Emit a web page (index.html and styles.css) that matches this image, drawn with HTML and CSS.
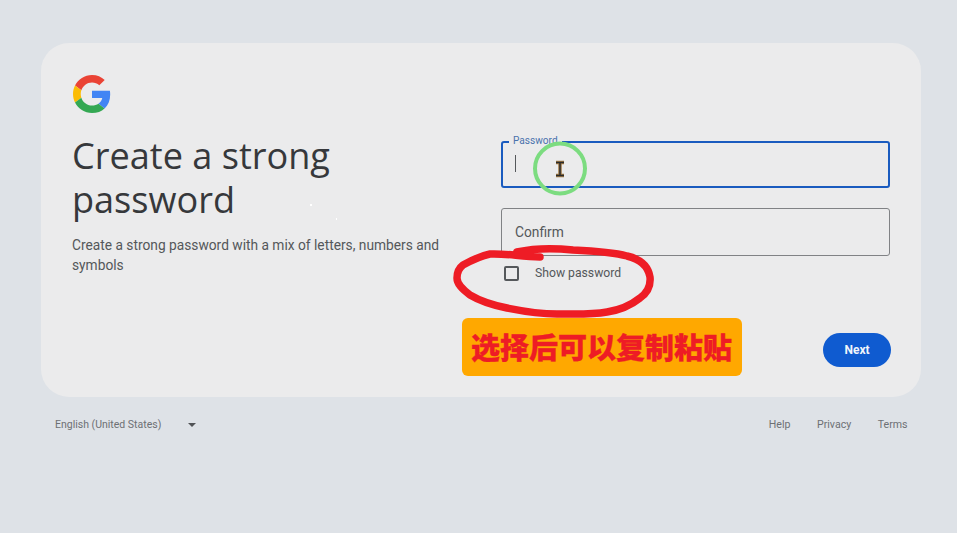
FILE: index.html
```html
<!DOCTYPE html>
<html lang="en">
<head>
  <meta charset="UTF-8" />
  <title>Create a strong password</title>
  <link rel="stylesheet" href="styles.css">
</head>
<body>
  <div class="card">
    <div class="intro">
      <svg class="logo" viewBox="0 0 48 48">
        <path fill="#EA4335" d="M24 9.5c3.54 0 6.71 1.22 9.21 3.6l6.85-6.85C35.9 2.38 30.47 0 24 0 14.62 0 6.51 5.38 2.56 13.22l7.98 6.19C12.43 13.72 17.74 9.5 24 9.5z"/>
        <path fill="#4285F4" d="M46.98 24.55c0-1.57-.15-3.09-.38-4.55H24v9.02h12.94c-.58 2.96-2.26 5.48-4.78 7.18l7.73 6c4.51-4.18 7.09-10.36 7.09-17.65z"/>
        <path fill="#FBBC05" d="M10.53 28.59c-.48-1.45-.76-2.99-.76-4.59s.27-3.14.76-4.59l-7.98-6.19C.92 16.46 0 20.12 0 24c0 3.88.92 7.54 2.56 10.78l7.97-6.19z"/>
        <path fill="#34A853" d="M24 48c6.48 0 11.93-2.13 15.89-5.81l-7.73-6c-2.15 1.45-4.92 2.3-8.16 2.3-6.26 0-11.57-4.22-13.47-9.91l-7.98 6.19C6.51 42.62 14.62 48 24 48z"/>
      </svg>
      <h1>Create a strong password</h1>
      <p class="hint">Create a strong password with a mix of letters, numbers and symbols</p>
    </div>

    <div class="form">
      <div class="field active">
        <span class="float-label">Password</span>
        <span class="caret"></span>
      </div>
      <div class="field">Confirm</div>
      <div class="show-row">
        <span class="checkbox"></span>
        <span>Show password</span>
      </div>
      <div class="actions">
        <button class="next">Next</button>
      </div>
    </div>
  </div>

  <div class="footer">
    <div class="lang">
      <span>English (United States)</span>
      <span class="arrow"></span>
    </div>
    <div class="links">
      <span>Help</span>
      <span>Privacy</span>
      <span>Terms</span>
    </div>
  </div>

  <!-- annotations drawn over the screenshot -->
  <svg class="marks" viewBox="0 0 957 533">
    <path class="scrawl" d="M517 252 C535 248 555 248 573 250 C595 251 612 252 627 256 C640 259 648 265 650 277 C651 287 647 293 640 298 C630 306 620 310 607 312 C590 315 575 314 557 314 C540 314 522 311 507 308 C492 305 480 301 470 295 C462 289 457 284 457 278 C457 272 459 268 463 265 C472 260 480 256 490 254 C505 253 522 257 540 257"/>
    <circle class="ring" cx="560" cy="168.5" r="25"/>
    <path class="ibeam-edge" d="M556 162.500h8M560 162.500v13M556 175.500h8"/>
    <path class="ibeam" d="M556 162.500h8M560 162.500v13M556 175.500h8"/>
    <rect class="speck" x="310" y="204" width="2" height="2"/>
    <rect class="speck" x="336" y="218" width="1" height="2"/>
  </svg>
  <div class="tag">选择后可以复制粘贴</div>
</body>
</html>
```

FILE: styles.css
```css
body {
  margin: 0;
  height: 533px;
  overflow: hidden;
  position: relative;
  background-color: #dee2e7;
  font-family: Roboto, "Liberation Sans", sans-serif;
  color: #54575a;
}
.card {
  display: flex;
  justify-content: space-between;
  box-sizing: border-box;
  width: 880px;
  height: 354px;
  margin: 43px 0 0 41px;
  padding: 32px 30px 30px 31px;
  background: #ebebec;
  border-radius: 28px;
}
.intro {
  width: 380px;
}
.logo {
  display: block;
  width: 38px;
  height: 38px;
  margin-left: 1px;
}
h1 {
  margin: 20px 0 0;
  font-family: "Open Sans", sans-serif;
  font-size: 36.1px;
  font-weight: 400;
  line-height: 44px;
  color: #36383b;
}
.hint {
  margin: 14px 0 0;
  font-size: 13.75px;
  line-height: 20px;
}
.form {
  width: 390px;
  padding-top: 66px;
  display: flex;
  flex-direction: column;
}
.field {
  position: relative;
  box-sizing: border-box;
  width: 389px;
  height: 48px;
  margin-bottom: 20px;
  padding: 0 13px;
  display: flex;
  align-items: center;
  border: 1px solid #808285;
  border-radius: 3px;
  font-size: 13.8px;
}
.field.active {
  height: 47px;
  border: 2px solid #1a5bbf;
}
.float-label {
  position: absolute;
  top: -9px;
  left: 6px;
  padding: 0 4px;
  background: #ebebec;
  color: #4a72ad;
  font-size: 10.1px;
  line-height: 14px;
}
.caret {
  width: 1px;
  height: 17px;
  margin: -3px 0 0 -1px;
  background: #55585b;
}
.show-row {
  display: flex;
  align-items: center;
  gap: 16px;
  margin: -12px 0 0 3px;
  font-size: 12.2px;
  line-height: 18px;
}
.checkbox {
  box-sizing: border-box;
  width: 15px;
  height: 15px;
  border: 2px solid #55585b;
  border-radius: 2px;
}
.actions {
  display: flex;
  justify-content: flex-end;
  margin-top: auto;
}
.next {
  width: 68px;
  height: 34px;
  border: none;
  border-radius: 17px;
  background-color: #0f5bd0;
  color: #f1f5fb;
  font-family: Roboto, sans-serif;
  font-size: 12px;
  font-weight: 700;
}
.footer {
  display: flex;
  justify-content: space-between;
  align-items: center;
  margin: 20px 49.500px 0 55px;
  font-size: 10.5px;
  line-height: 16px;
  color: #6d7074;
}
.lang {
  display: flex;
  align-items: center;
  gap: 27px;
}
.arrow {
  width: 0;
  height: 0;
  border-left: 4px solid transparent;
  border-right: 4px solid transparent;
  border-top: 4px solid #505356;
}
.links {
  display: flex;
  gap: 26.500px;
  font-size: 10.6px;
}
.marks {
  position: absolute;
  top: 0;
  left: 0;
  width: 957px;
  height: 533px;
  pointer-events: none;
}
.scrawl {
  fill: none;
  stroke: #ee1c25;
  stroke-width: 7.5;
  stroke-linecap: round;
  stroke-linejoin: round;
}
.ring {
  fill: none;
  stroke: #7cdc80;
  stroke-width: 4;
}
.ibeam-edge {
  fill: none;
  stroke: #a07a45;
  stroke-width: 3.5;
}
.ibeam {
  fill: none;
  stroke: #2b2b2b;
  stroke-width: 1.5;
}
.speck {
  fill: #ffffff;
}
.tag {
  position: absolute;
  top: 318px;
  left: 462px;
  width: 279px;
  height: 58px;
  padding-right: 1px;
  border-radius: 6px;
  background: #ffa800;
  color: #ee1c25;
  font-family: "Noto Sans CJK SC", sans-serif;
  font-size: 29px;
  font-weight: 900;
  line-height: 57px;
  text-align: center;
  -webkit-text-stroke: 0.3px #ee1c25;
}
```
